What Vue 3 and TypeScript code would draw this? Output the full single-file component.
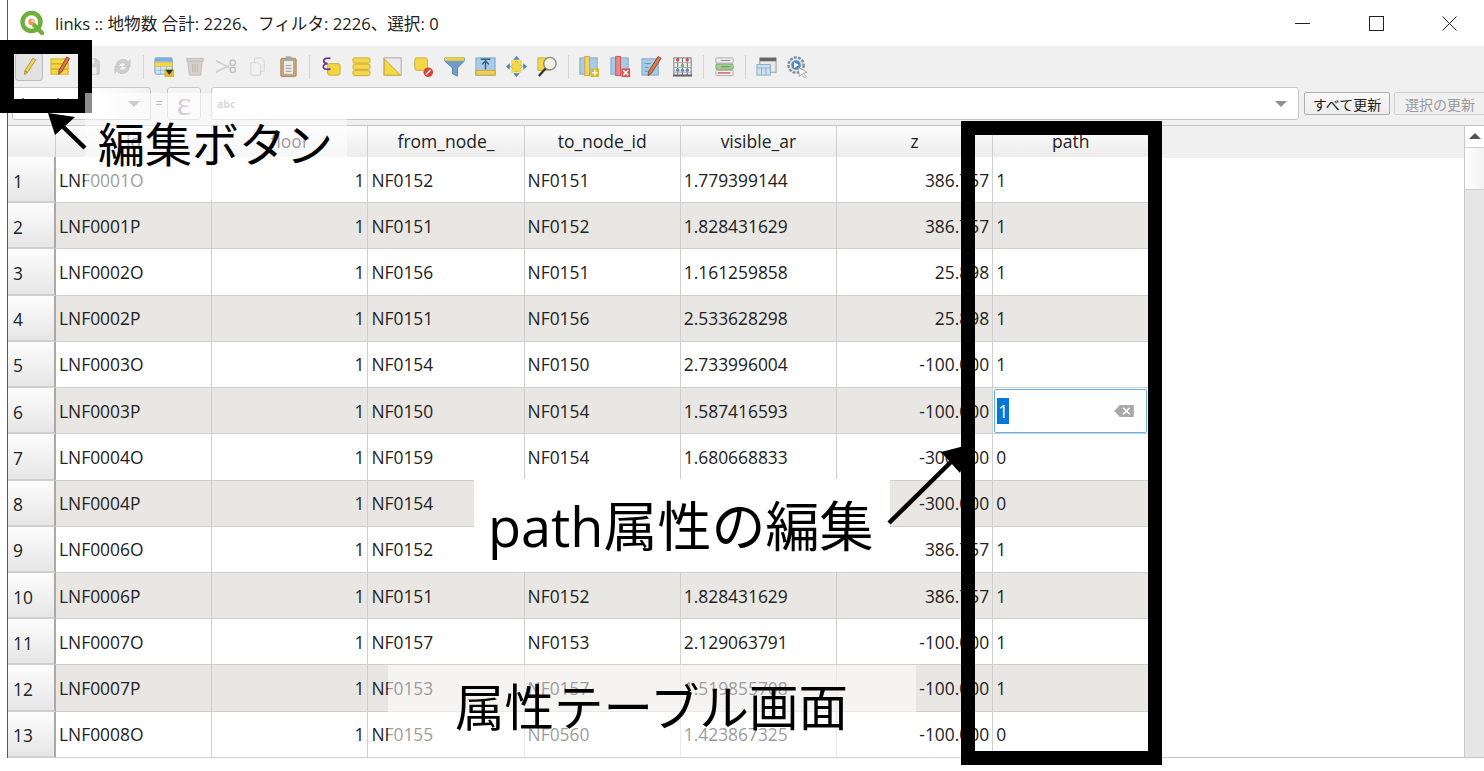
<script setup lang="ts">
interface Row { id: string; from: string; to: string; vis: string; z: string; path: string }
const columns: string[] = ['id', 'floor', 'from_node_', 'to_node_id', 'visible_ar', 'z', 'path']
const rows: Row[] = [
  { id: 'LNF0001O', from: 'NF0152', to: 'NF0151', vis: '1.779399144', z: '386.757', path: '1' },
  { id: 'LNF0001P', from: 'NF0151', to: 'NF0152', vis: '1.828431629', z: '386.757', path: '1' },
  { id: 'LNF0002O', from: 'NF0156', to: 'NF0151', vis: '1.161259858', z: '25.898', path: '1' },
  { id: 'LNF0002P', from: 'NF0151', to: 'NF0156', vis: '2.533628298', z: '25.898', path: '1' },
  { id: 'LNF0003O', from: 'NF0154', to: 'NF0150', vis: '2.733996004', z: '-100.000', path: '1' },
  { id: 'LNF0003P', from: 'NF0150', to: 'NF0154', vis: '1.587416593', z: '-100.000', path: '1' },
  { id: 'LNF0004O', from: 'NF0159', to: 'NF0154', vis: '1.680668833', z: '-300.000', path: '0' },
  { id: 'LNF0004P', from: 'NF0154', to: 'NF0159', vis: '1.680668833', z: '-300.000', path: '0' },
  { id: 'LNF0006O', from: 'NF0152', to: 'NF0151', vis: '1.779399144', z: '386.757', path: '1' },
  { id: 'LNF0006P', from: 'NF0151', to: 'NF0152', vis: '1.828431629', z: '386.757', path: '1' },
  { id: 'LNF0007O', from: 'NF0157', to: 'NF0153', vis: '2.129063791', z: '-100.000', path: '1' },
  { id: 'LNF0007P', from: 'NF0153', to: 'NF0157', vis: '1.519855708', z: '-100.000', path: '1' },
  { id: 'LNF0008O', from: 'NF0155', to: 'NF0560', vis: '1.423867325', z: '-100.000', path: '0' }
]
</script>

<template>
  <div class="page">
    <div class="window">
      <header class="titlebar">
        <svg class="logo" viewBox="0 0 26 26" width="26" height="26">
          <circle cx="12.5" cy="12" r="9" fill="none" stroke="#6fb03c" stroke-width="4.4" />
          <path d="M15 15l8 8" stroke="#6fb03c" stroke-width="4.4" stroke-linecap="round" />
          <circle cx="12.5" cy="12" r="3.2" fill="#ee9a4d" />
          <circle cx="13.5" cy="11" r="1.1" fill="#fff" />
        </svg>
        <span class="title">links :: 地物数 合計: 2226、フィルタ: 2226、選択: 0</span>
        <div class="controls">
          <svg width="15" height="15" viewBox="0 0 15 15"><path d="M0 7.5h15" stroke="#222" fill="none" /></svg>
          <svg width="15" height="15" viewBox="0 0 15 15"><rect x=".5" y=".5" width="14" height="14" stroke="#222" fill="none" /></svg>
          <svg width="15" height="15" viewBox="0 0 15 15"><path d="M.5.5l14 14M14.5.5l-14 14" stroke="#222" fill="none" /></svg>
        </div>
      </header>

      <div class="toolbar">
        <span class="tool active">
          <svg viewBox="0 0 24 24"><path d="M15.5 3.5l3 1.6-8.4 13-3.2 2.4.2-4z" fill="#efd253" stroke="#b2942f" /><path d="M7 16.500l3 1.700" stroke="#8a7a45" /></svg>
        </span>
        <span class="tool">
          <svg viewBox="0 0 24 24"><rect x="2" y="4" width="18" height="5" fill="#f5d93e" stroke="#d0ad38" /><rect x="2" y="9.500" width="18" height="5" fill="#f5d93e" stroke="#d0ad38" /><rect x="2" y="15" width="18" height="5" fill="#f5d93e" stroke="#d0ad38" /><path d="M18.500 2l3 1.700-8.300 14-3 2.300.1-3.800z" fill="#d9774a" stroke="#8c4a31" /></svg>
        </span>
        <span class="tool off">
          <svg viewBox="0 0 24 24"><path d="M4 4h13l3 3v13H4z" fill="#c9c9c9" stroke="#aaa" /><rect x="8" y="4" width="7" height="5" fill="#eee" /><rect x="7" y="13" width="10" height="7" fill="#eee" /></svg>
        </span>
        <span class="tool off">
          <svg viewBox="0 0 24 24"><path d="M5 11a7.500 7.500 0 0 1 13-4l2-2v7h-7l2.500-2.500A4.500 4.500 0 0 0 8 11z" fill="#c5c5c5" stroke="#aaa" stroke-width=".6" /><path d="M19 13a7.500 7.500 0 0 1-13 4l-2 2v-7h7l-2.500 2.500A4.500 4.500 0 0 0 16 13z" fill="#c5c5c5" stroke="#aaa" stroke-width=".6" /></svg>
        </span>
        <i class="sep"></i>
        <span class="tool">
          <svg viewBox="0 0 24 24"><rect x="2" y="3" width="18" height="17" rx="1.500" fill="#d6e6f5" stroke="#6f9fcb" /><rect x="2" y="3" width="18" height="4" fill="#7fadd8" /><rect x="2" y="8" width="18" height="4" fill="#f3d94a" stroke="#d0ad38" stroke-width=".6" /><path d="M8 12v8M14 12v8M2 16h18" stroke="#8fb3d5" stroke-width=".8" /><rect x="12" y="15" width="10" height="8" fill="#d9b72e" /><path d="M13 15.500h8l-4 5z" fill="#333" /></svg>
        </span>
        <span class="tool off">
          <svg viewBox="0 0 24 24"><path d="M4 6h15l-1.500 15h-12z" fill="#cfc6c2" stroke="#b5a9a4" /><rect x="3" y="3.500" width="17" height="3" fill="#cfc6c2" stroke="#b5a9a4" /><path d="M9 9v9M11.500 9v9M14 9v9" stroke="#aea29c" /></svg>
        </span>
        <span class="tool off">
          <svg viewBox="0 0 24 24"><path d="M1 6l14 7M1 18l14-7" stroke="#c4c4c4" stroke-width="1.800" fill="none" /><circle cx="18.500" cy="8" r="2.800" fill="none" stroke="#b3b3b3" stroke-width="1.500" /><circle cx="18.500" cy="15.500" r="2.800" fill="none" stroke="#b3b3b3" stroke-width="1.500" /></svg>
        </span>
        <span class="tool off">
          <svg viewBox="0 0 24 24"><path d="M9 3h7l3 3v11H9z" fill="#eee" stroke="#ccc" /><path d="M5 8h7l3 3v10H5z" fill="#f2f2f2" stroke="#ccc" /></svg>
        </span>
        <span class="tool">
          <svg viewBox="0 0 24 24"><rect x="4" y="3.500" width="16" height="19" rx="1.500" fill="#c9a67c" stroke="#a98758" /><rect x="7" y="6" width="10" height="14" fill="#ececec" stroke="#999" stroke-width=".6" /><rect x="9" y="1.500" width="6" height="4" fill="#a5a5a5" /><path d="M9 11h6M9 14h6M9 17h6" stroke="#888" stroke-width=".8" /></svg>
        </span>
        <i class="sep"></i>
        <span class="tool">
          <svg viewBox="0 0 24 24"><rect x="9" y="9" width="13" height="12" rx="2" fill="#f3d53d" stroke="#cfa936" /><path d="M12 3.500C7 2.500 4.500 4.500 5 6.500c.3 1.500 2 2.300 4 2.500-2.500.2-5 1.500-4.500 3.700.5 2 3.500 2.800 7.500 1.800" fill="none" stroke="#6c3f8c" stroke-width="1.900" /></svg>
        </span>
        <span class="tool">
          <svg viewBox="0 0 24 24"><rect x="3" y="3" width="18" height="5.500" rx="2" fill="#f3d94a" stroke="#cfa936" /><rect x="3" y="9.500" width="18" height="5.500" rx="2" fill="#f3d94a" stroke="#cfa936" /><rect x="3" y="16" width="18" height="5.500" rx="2" fill="#f3d94a" stroke="#cfa936" /></svg>
        </span>
        <span class="tool">
          <svg viewBox="0 0 24 24"><rect x="3" y="3" width="18" height="18" fill="#ebebeb" stroke="#a8a8a8" /><path d="M3.500 4L20.500 21H3.500z" fill="#f3d94a" stroke="#cfa936" /></svg>
        </span>
        <span class="tool">
          <svg viewBox="0 0 24 24"><rect x="3" y="3" width="13" height="13" rx="2" fill="#f3d94a" stroke="#cfa936" /><circle cx="17" cy="18" r="5" fill="#d9453d" /><path d="M14.500 20.500l5-5" stroke="#fff" stroke-width="1.400" /></svg>
        </span>
        <span class="tool">
          <svg viewBox="0 0 24 24"><path d="M2 3h20v3.500l-7 7V22l-5-2.500v-6l-8-7z" fill="#6f9fc9" stroke="#517ea8" /><rect x="2" y="2.500" width="20" height="3.500" fill="#f0d23f" /></svg>
        </span>
        <span class="tool">
          <svg viewBox="0 0 24 24"><rect x="2" y="3" width="20" height="18" fill="#a9cbe7" stroke="#7fa6c8" /><rect x="2" y="16" width="20" height="5" fill="#ebd05a" stroke="#c7a83a" /><path d="M12 15V7M8.500 10L12 6l3.500 4M7 4.500h10" stroke="#335e84" stroke-width="1.500" fill="none" /></svg>
        </span>
        <span class="tool">
          <svg viewBox="0 0 24 24"><path d="M12 6l6 6-6 6-6-6z" fill="#f3d94a" stroke="#c7a83a" /><path d="M12 1l3.500 4h-7zM12 23l3.500-4h-7zM1 12l4-3.500v7zM23 12l-4-3.500v7z" fill="#4f83b8" /><rect x="6.500" y="5.500" width="4" height="4" fill="#f3d94a" /><rect x="13.500" y="5.500" width="4" height="4" fill="#f3d94a" /><rect x="6.500" y="14.500" width="4" height="4" fill="#f3d94a" /><rect x="13.500" y="14.500" width="4" height="4" fill="#f3d94a" /></svg>
        </span>
        <span class="tool">
          <svg viewBox="0 0 24 24"><rect x="2" y="3" width="13" height="13" fill="#f3d94a" stroke="#cfa936" /><circle cx="14.500" cy="9" r="6.500" fill="#f4f2e8" stroke="#8d8d80" stroke-width="1.500" /><path d="M10 14l-7 8" stroke="#333" stroke-width="2.400" /></svg>
        </span>
        <i class="sep"></i>
        <span class="tool">
          <svg viewBox="0 0 24 24"><rect x="2" y="3" width="18" height="17" fill="#a9cbe7" stroke="#7fa6c8" /><rect x="7" y="1.500" width="5" height="20" fill="#ecd46a" stroke="#c7a83a" /><rect x="13" y="14" width="9" height="9" fill="#d9b72e" /><path d="M17.500 15.500v6M14.500 18.500h6" stroke="#fff" stroke-width="1.500" /></svg>
        </span>
        <span class="tool">
          <svg viewBox="0 0 24 24"><rect x="2" y="3" width="18" height="17" fill="#a9cbe7" stroke="#7fa6c8" /><rect x="7" y="1.500" width="5" height="20" fill="#e68a8a" stroke="#c55" /><rect x="13" y="14" width="9" height="9" fill="#d9565a" /><path d="M15 16l5 5M20 16l-5 5" stroke="#fff" stroke-width="1.500" /></svg>
        </span>
        <span class="tool">
          <svg viewBox="0 0 24 24"><rect x="2" y="4" width="17" height="17" fill="#a9cbe7" stroke="#7fa6c8" /><path d="M5 9h6M5 13h4M5 17h3" stroke="#5e8fb9" /><path d="M19 1.500l3 2-10 15.500-3.500 2.500.3-4.200z" fill="#dd7a46" stroke="#7a4a30" /></svg>
        </span>
        <span class="tool">
          <svg viewBox="0 0 24 24"><rect x="3" y="3" width="18" height="18" fill="#efefef" stroke="#777" /><path d="M7 3v18M12 3v18M17 3v18" stroke="#666" /><path d="M3 8h18M3 13h18M3 18h18" stroke="#a8a8a8" /><circle cx="7" cy="5" r="1.800" fill="#d0504a" /><circle cx="17" cy="5" r="1.800" fill="#d0504a" /><circle cx="12" cy="11" r="1.800" fill="#70b860" /><circle cx="7" cy="16" r="1.800" fill="#5d8fc2" /><circle cx="12" cy="16" r="1.800" fill="#5d8fc2" /><circle cx="17" cy="16" r="1.800" fill="#5d8fc2" /><rect x="2" y="20.500" width="20" height="2" fill="#666" /></svg>
        </span>
        <i class="sep"></i>
        <span class="tool">
          <svg viewBox="0 0 24 24"><rect x="3" y="3" width="18" height="5.500" rx="1" fill="#efefef" stroke="#aaa" /><rect x="3" y="9.500" width="18" height="5.500" rx="1" fill="#9fd08e" stroke="#7eaf70" /><rect x="3" y="16" width="18" height="5.500" rx="1" fill="#efefef" stroke="#aaa" /><path d="M8 5.700h10M8 12.200h10" stroke="#777" stroke-width=".9" /><path d="M5 18.700h13" stroke="#d04a48" stroke-width="1.300" /></svg>
        </span>
        <i class="sep"></i>
        <span class="tool">
          <svg viewBox="0 0 24 24"><rect x="5" y="3" width="17" height="15" fill="#e8e8e8" stroke="#9a9a9a" /><rect x="5" y="3" width="17" height="3.500" fill="#666" /><rect x="2" y="10" width="14" height="11" fill="#cfe0f0" stroke="#88a9c6" /><path d="M2 13.500h14M7 13.500V21M11.500 13.500V21" stroke="#88a9c6" /></svg>
        </span>
        <span class="tool">
          <svg viewBox="0 0 24 24"><circle cx="10.500" cy="10.500" r="8" fill="#dfe3e6" stroke="#7f8b94" stroke-width="2.400" stroke-dasharray="3 1.400" /><circle cx="10.500" cy="10.500" r="5" fill="#4f8ac4" /><path d="M8.500 7.500v6l5-3z" fill="#fff" /><path d="M13 13l9 5-4 1 3 3.500-2 1-2.500-3.500-2.500 2.500z" fill="#fff" stroke="#888" stroke-width=".7" /></svg>
        </span>
      </div>

      <div class="formrow">
        <div class="combo">
          <span class="combo-text">length</span>
          <i class="caret"></i>
        </div>
        <span class="equals">=</span>
        <div class="epsilon">ε</div>
        <div class="expr">
          <span class="placeholder">abc</span>
          <i class="caret"></i>
        </div>
        <button class="btn" type="button">すべて更新</button>
        <button class="btn disabled" type="button">選択の更新</button>
      </div>

      <div class="tablewrap">
        <div class="table">
          <div class="row head">
            <div class="corner"></div>
            <div v-for="c in columns" :key="c" class="hcell">{{ c }}</div>
            <div class="filler"></div>
          </div>
          <div v-for="(r, i) in rows" :key="r.id" class="row" :class="{ alt: i % 2 === 1 }">
            <div class="rowhead">{{ i + 1 }}</div>
            <div class="cell">{{ r.id }}</div>
            <div class="cell num">1</div>
            <div class="cell">{{ r.from }}</div>
            <div class="cell">{{ r.to }}</div>
            <div class="cell">{{ r.vis }}</div>
            <div class="cell num">{{ r.z }}</div>
            <div v-if="i === 5" class="cell editing">
              <div class="editor">
                <span class="selected">1</span>
                <svg class="clear" viewBox="0 0 22 15" width="21" height="14">
                  <path d="M6 1h15v13H6L0 7.500z" fill="#a8a8a8" />
                  <path d="M9.500 4l7 7M16.500 4l-7 7" stroke="#fff" stroke-width="1.800" />
                </svg>
              </div>
            </div>
            <div v-else class="cell">{{ r.path }}</div>
          </div>
        </div>
        <div class="scrollbar">
          <div class="sb-up"><i></i></div>
          <div class="sb-thumb"></div>
        </div>
      </div>
    </div>

    <!-- annotations drawn over the screenshot -->
    <div class="frame frame-edit"></div>
    <div class="veil veil-edit"></div>
    <div class="frame frame-path"></div>
    <div class="veil veil-path"></div>
    <div class="veil veil-table"></div>
    <svg class="arrows" width="1484" height="771" viewBox="0 0 1484 771">
      <path d="M85 148L56 120" stroke="#000" stroke-width="4.500" fill="none" />
      <path d="M48 113l27 4-20 18z" fill="#000" />
      <path d="M889 523L955 458" stroke="#000" stroke-width="4.500" fill="none" />
      <path d="M972 444l-31 8 19 21z" fill="#000" />
    </svg>
    <span class="label label-edit">編集ボタン</span>
    <span class="label label-path">path属性の編集</span>
    <span class="label label-table">属性テーブル画面</span>
  </div>
</template>

<style scoped>
.page {
  position: relative;
  width: 1484px;
  height: 771px;
  overflow: hidden;
  background: #fff;
  font-family: "Open Sans", "Noto Sans", "Noto Sans CJK JP", sans-serif;
  color: #222;
}
.window {
  margin-left: 7px;
  height: 758px;
  border-left: 1px solid #5a5a5a;
  display: flex;
  flex-direction: column;
}
.titlebar {
  height: 46px;
  flex: none;
  display: flex;
  align-items: center;
  padding-left: 11px;
  background: #fff;
}
.logo { flex: none; margin-top: -1px; }
.title {
  margin-left: 10px;
  font-size: 16.600px;
  font-family: "Open Sans", "Noto Sans CJK JP", sans-serif;
}
.controls {
  margin-left: auto;
  padding-right: 27px;
  display: flex;
  align-items: center;
  gap: 58.500px;
}
.toolbar {
  height: 41px;
  flex: none;
  display: flex;
  align-items: center;
  padding-left: 6px;
  background: #f0f0f0;
}
.tool {
  width: 31px;
  height: 28px;
  flex: none;
  display: flex;
  align-items: center;
  justify-content: center;
  box-sizing: border-box;
}
.tool svg { width: 23px; height: 23px; filter: blur(.3px); }
.tool.off svg { opacity: .75; }
.tool.active {
  width: 28px;
  margin: 0 2px 0 1px;
  background: #e2e2e2;
  border: 1px solid #bdbdbd;
  border-radius: 3px;
}
.sep {
  width: 11px;
  height: 24px;
  flex: none;
  background: linear-gradient(#d4d4d4, #d4d4d4) center / 1px 100% no-repeat;
}
.formrow {
  height: 39px;
  flex: none;
  display: flex;
  align-items: flex-start;
  padding-left: 4px;
  background: #f0f0f0;
  box-sizing: border-box;
  border-bottom: 1px solid #c4c4c4;
}
.combo, .epsilon, .expr {
  height: 33px;
  flex: none;
  box-sizing: border-box;
  border: 1px solid #c6c6c6;
  border-radius: 3px;
  background: #fff;
  display: flex;
  align-items: center;
}
.combo {
  width: 139px;
  position: relative;
  padding-left: 8px;
  font-size: 15px;
  background: linear-gradient(90deg, #fff 60%, #f1f1f1);
}
.combo .caret { right: 10px; }
.combo-text { line-height: 1; }
.caret {
  position: absolute;
  right: 11px;
  top: 13px;
  width: 0;
  height: 0;
  border: 6px solid transparent;
  border-top: 6px solid #8e8e8e;
  border-bottom: 0;
}
.equals {
  width: 16px;
  flex: none;
  text-align: center;
  font-size: 13px;
  color: #777;
  line-height: 33px;
}
.epsilon {
  width: 34px;
  justify-content: center;
  background: #f5f5f5;
  font-family: "Liberation Serif", serif;
  font-size: 34px;
  color: #a68cb2;
  line-height: 1;
}
.expr {
  margin-left: 10px;
  width: 1088px;
  position: relative;
  padding-left: 5px;
}
.placeholder {
  font-size: 10.500px;
  font-weight: 700;
  color: #aaa;
}
.btn {
  margin-top: 5px;
  height: 23px;
  flex: none;
  padding: 0;
  box-sizing: border-box;
  border: 1px solid #adadad;
  border-radius: 2px;
  background: linear-gradient(#f8f8f8, #ececec);
  font-family: "Noto Sans CJK JP", sans-serif;
  font-size: 14px;
  color: #1c1c1c;
  line-height: 1;
  margin-left: 5px;
  width: 86px;
}
.btn.disabled {
  width: 92px;
  color: #9a9a9a;
  border-color: #d0d0d0;
  background: #f0f0f0;
  margin-left: 4px;
}
.tablewrap {
  flex: 1;
  display: flex;
  min-height: 0;
  border-bottom: 1px solid #c4c4c4;
}
.table { flex: 1; min-width: 0; }
.row {
  display: grid;
  grid-template-columns: 48px repeat(7, 156.200px);
  height: 46.230px;
  box-sizing: border-box;
  font-size: 17.400px;
}
.row.alt .cell { background: #e8e7e4; }
.row.head {
  height: 31px;
  grid-template-columns: 48px repeat(7, 156.200px) 1fr;
}
.corner, .hcell {
  background: linear-gradient(#fdfdfd, #ececec);
  border-right: 1px solid #cfcfcf;
  border-bottom: 1px solid #c4c4c4;
}
.hcell {
  text-align: center;
  line-height: 31px;
  font-size: 17.500px;
}
.filler { background: #f0f0f0; }
.rowhead {
  background: linear-gradient(#fdfdfd, #e6e6e6);
  border-right: 2px solid #a9a9a9;
  border-bottom: 2px solid #cfcfcf;
  box-sizing: border-box;
  padding-left: 5px;
  display: flex;
  align-items: center;
  padding-top: 3px;
}
.cell {
  box-sizing: border-box;
  border-right: 1px solid #cfcfcf;
  border-bottom: 1px solid #cfcfcf;
  padding: 0 3px 0 3px;
  display: flex;
  align-items: center;
  min-width: 0;
  white-space: nowrap;
  background: #fff;
}
.cell.num { justify-content: flex-end; }
.cell.editing {
  padding: 0 1px 0 1px;
  background: #fff;
}
.row.alt .cell.editing { background: #fff; }
.editor {
  width: 100%;
  height: 44px;
  box-sizing: border-box;
  border: 1.500px solid #63b1ee;
  border-radius: 2px;
  display: flex;
  align-items: center;
  padding-left: 2px;
  padding-right: 11px;
  justify-content: space-between;
}
.selected {
  background: #0078d7;
  color: #fff;
  line-height: 26px;
  padding: 0 1px;
}
.clear { flex: none; }
.scrollbar {
  width: 20px;
  flex: none;
  background: #e6e6e6;
  border-left: 1px solid #c8c8c8;
  box-sizing: border-box;
}
.sb-up {
  height: 21px;
  background: #fff;
  border-bottom: 1px solid #cfcfcf;
  position: relative;
}
.sb-up i {
  position: absolute;
  left: 4px;
  top: 7px;
  width: 0;
  height: 0;
  border: 6px solid transparent;
  border-bottom: 6px solid #555;
  border-top: 0;
}
.sb-thumb {
  height: 41px;
  background: linear-gradient(90deg, #fff, #f2f2f2);
  border-bottom: 1px solid #cfcfcf;
}
.frame {
  position: absolute;
  box-sizing: border-box;
  border: 14px solid #000;
}
.frame-edit { left: 0; top: 40px; width: 92px; height: 73px; }
.frame-path { left: 961px; top: 121px; width: 201px; height: 644px; }
.veil { position: absolute; background: rgba(255, 255, 255, .5); }
.veil-edit { left: 85px; top: 93px; width: 262px; height: 107px; background: rgba(255, 255, 255, .55); }
.veil-path { left: 474px; top: 479px; width: 416px; height: 93px; background: #fff; }
.veil-table { left: 388px; top: 665px; width: 528px; height: 92px; background: rgba(255, 255, 255, .55); }
.arrows { position: absolute; left: 0; top: 0; }
.label {
  position: absolute;
  font-family: "Noto Sans CJK JP", sans-serif;
  font-size: 47px;
  line-height: 1;
  color: #000;
  white-space: nowrap;
}
.label-edit { left: 98px; top: 118px; }
.label-path { left: 488px; top: 499px; font-size: 54px; font-family: "Open Sans", "Noto Sans CJK JP", sans-serif; }
.label-table { left: 455px; top: 680px; font-size: 49.500px; }
</style>

<style>
html, body { margin: 0; overflow: hidden; background: #fff; }
</style>
